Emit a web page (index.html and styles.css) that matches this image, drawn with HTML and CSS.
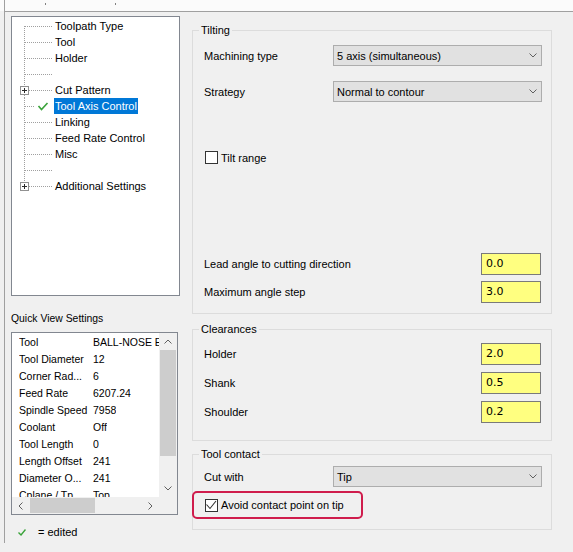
FILE: index.html
```html
<!DOCTYPE html>
<html>
<head>
<meta charset="utf-8">
<link rel="stylesheet" href="styles.css">
</head>
<body>
<div class="topstrip"><span class="vline"></span><span class="tick t1"></span><span class="tick t2"></span></div>
<div class="frame">
  <div class="left">
    <div class="tree">
      <div class="trow"><svg width="42" height="16"><path class="dot" d="M12.5 8V16M13 8.5H40"/></svg><span class="tlabel">Toolpath Type</span></div>
      <div class="trow"><svg width="42" height="16"><path class="dot" d="M12.5 0V16M13 8.5H40"/></svg><span class="tlabel">Tool</span></div>
      <div class="trow"><svg width="42" height="16"><path class="dot" d="M12.5 0V16M13 8.5H40"/></svg><span class="tlabel">Holder</span></div>
      <div class="trow"><svg width="42" height="16"><path class="dot" d="M12.5 0V16M13 8.5H40"/></svg><span class="tlabel"></span></div>
      <div class="trow"><svg width="42" height="16"><path class="dot" d="M12.5 0V4M12.5 13V16M17 8.5H40"/><rect class="pbox" x="8.5" y="4.5" width="8" height="8"/><path class="plus" d="M10 8.5H15M12.5 6V11"/></svg><span class="tlabel">Cut Pattern</span></div>
      <div class="trow"><svg width="42" height="16"><path class="dot" d="M12.5 0V16M13 8.5H22"/><path class="tcheck" d="M26.5 8L29.5 11.5L35.5 5"/></svg><span class="tlabel sel">Tool Axis Control</span></div>
      <div class="trow"><svg width="42" height="16"><path class="dot" d="M12.5 0V16M13 8.5H40"/></svg><span class="tlabel">Linking</span></div>
      <div class="trow"><svg width="42" height="16"><path class="dot" d="M12.5 0V16M13 8.5H40"/></svg><span class="tlabel">Feed Rate Control</span></div>
      <div class="trow"><svg width="42" height="16"><path class="dot" d="M12.5 0V16M13 8.5H40"/></svg><span class="tlabel">Misc</span></div>
      <div class="trow"><svg width="42" height="16"><path class="dot" d="M12.5 0V16M13 8.5H40"/></svg><span class="tlabel"></span></div>
      <div class="trow"><svg width="42" height="16"><path class="dot" d="M12.5 0V4M17 8.5H40"/><rect class="pbox" x="8.5" y="4.5" width="8" height="8"/><path class="plus" d="M10 8.5H15M12.5 6V11"/></svg><span class="tlabel">Additional Settings</span></div>
    </div>
    <div class="qv-label">Quick View Settings</div>
    <div class="listbox">
      <div class="lb-content">
        <div class="lb-row"><span class="c1">Tool</span><span class="c2">BALL-NOSE E...</span></div>
        <div class="lb-row"><span class="c1">Tool Diameter</span><span class="c2">12</span></div>
        <div class="lb-row"><span class="c1">Corner Rad...</span><span class="c2">6</span></div>
        <div class="lb-row"><span class="c1">Feed Rate</span><span class="c2">6207.24</span></div>
        <div class="lb-row"><span class="c1">Spindle Speed</span><span class="c2">7958</span></div>
        <div class="lb-row"><span class="c1">Coolant</span><span class="c2">Off</span></div>
        <div class="lb-row"><span class="c1">Tool Length</span><span class="c2">0</span></div>
        <div class="lb-row"><span class="c1">Length Offset</span><span class="c2">241</span></div>
        <div class="lb-row"><span class="c1">Diameter O...</span><span class="c2">241</span></div>
        <div class="lb-row"><span class="c1">Cplane / Tp...</span><span class="c2">Top</span></div>
      </div>
      <div class="vscroll">
        <div class="sb-btn"><svg width="8" height="5"><path class="arr" d="M0.5 4.5L4 1L7.5 4.5"/></svg></div>
        <div class="vthumb"></div>
        <div class="vtrack"></div>
        <div class="sb-btn"><svg width="8" height="5"><path class="arr" d="M0.5 0.5L4 4L7.5 0.5"/></svg></div>
      </div>
      <div class="hscroll">
        <div class="sb-btn h"><svg width="5" height="8"><path class="arr" d="M4.5 0.5L1 4L4.5 7.5"/></svg></div>
        <div class="hthumb"></div>
        <div class="htrack"></div>
        <div class="sb-btn h"><svg width="5" height="8"><path class="arr" d="M0.5 0.5L4 4L0.5 7.5"/></svg></div>
      </div>
      <div class="corner"></div>
    </div>
    <div class="legend"><svg width="8" height="7"><path class="lcheck" d="M0.5 3.5L3 6L7.5 0.5"/></svg><span class="ltext">= edited</span></div>
  </div>

  <div class="right">
    <div class="group g-tilt">
      <div class="gtitle">Tilting</div>
      <div class="gbody">
        <div class="row r-sel r1"><span>Machining type</span><div class="select"><span>5 axis (simultaneous)</span><svg width="8" height="5"><path class="chev" d="M0.5 0.5L4 4L7.5 0.5"/></svg></div></div>
        <div class="row r-sel r2"><span>Strategy</span><div class="select"><span>Normal to contour</span><svg width="8" height="5"><path class="chev" d="M0.5 0.5L4 4L7.5 0.5"/></svg></div></div>
        <div class="row r-cb"><span class="cb"></span><span class="cblabel">Tilt range</span></div>
        <div class="row r-num r-lead"><span>Lead angle to cutting direction</span><div class="num">0.0</div></div>
        <div class="row r-num r-gap6"><span>Maximum angle step</span><div class="num">3.0</div></div>
      </div>
    </div>

    <div class="group g-clear">
      <div class="gtitle">Clearances</div>
      <div class="gbody">
        <div class="row r-num r-first"><span>Holder</span><div class="num">2.0</div></div>
        <div class="row r-num r-gap7"><span>Shank</span><div class="num">0.5</div></div>
        <div class="row r-num r-gap7"><span>Shoulder</span><div class="num">0.2</div></div>
      </div>
    </div>

    <div class="group g-contact">
      <div class="gtitle">Tool contact</div>
      <div class="gbody">
        <div class="row r-sel r-cut"><span>Cut with</span><div class="select"><span>Tip</span><svg width="8" height="5"><path class="chev" d="M0.5 0.5L4 4L7.5 0.5"/></svg></div></div>
        <div class="hl"><span class="cb on"><svg width="11" height="11"><path d="M0.5 4.5L4 8.5L10 1"/></svg></span><span class="cblabel">Avoid contact point on tip</span></div>
      </div>
    </div>
  </div>
</div>
</body>
</html>
```

FILE: styles.css
```css
* { box-sizing: border-box; }
html, body { margin: 0; padding: 0; }
body {
  width: 573px;
  height: 552px;
  overflow: hidden;
  background: #f0f0f0;
  font-family: "Liberation Sans", Arial, sans-serif;
  font-size: 11px;
  color: #000;
}

.topstrip { height: 11px; background: #fbfbfb; display: flex; align-items: flex-start; }
.topstrip .vline { width: 1px; height: 11px; background: #a0a0a0; margin-left: 4px; }
.tick { width: 1px; height: 2px; background: #808080; margin-top: 3px; }
.tick.t1 { margin-left: 40px; }
.tick.t2 { margin-left: 69px; }

.frame {
  margin-left: 4px;
  border-left: 1px solid #a0a0a0;
  border-top: 1px solid #a0a0a0;
  height: 532px;
  padding: 4px 0 0 6px;
  display: flex;
  align-items: flex-start;
}

/* left column */
.left { width: 169px; flex: none; }
.tree { height: 280px; border: 1px solid #828790; background: #fff; padding-top: 1px; }
.trow { height: 16px; display: flex; align-items: center; }
.trow svg { flex: none; display: block; }
.tlabel { padding: 0 1px; height: 16px; line-height: 16px; white-space: nowrap; }
.tlabel.sel { background: #0078d7; color: #fff; }
.dot { stroke: #a0a0a0; stroke-dasharray: 1 1; fill: none; }
.pbox { fill: #fff; stroke: #919191; }
.plus { stroke: #2b2b2b; fill: none; }
.tcheck { stroke: #3aa33a; stroke-width: 1.6; fill: none; }

.qv-label { margin-top: 16px; height: 14px; line-height: 14px; font-size: 10.4px; }
.listbox {
  margin-top: 6px;
  width: 167px;
  height: 183px;
  border: 1px solid #828790;
  background: #fff;
  display: grid;
  grid-template-columns: 147px 18px;
  grid-template-rows: 164px 17px;
}
.lb-content { overflow: hidden; padding: 1px 0 0 7px; font-size: 10.5px; }
.lb-row { height: 17px; line-height: 17px; display: flex; white-space: nowrap; }
.c1 { width: 74px; flex: none; overflow: hidden; }
.c2 { overflow: hidden; }
.vscroll { background: #f0f0f0; display: flex; flex-direction: column; }
.sb-btn { height: 17px; flex: none; display: flex; align-items: center; justify-content: center; }
.sb-btn.h { width: 17px; height: 17px; }
.sb-btn svg { display: block; }
.arr { stroke: #606060; fill: none; }
.vthumb { height: 106px; margin: 0 1px 0 1px; background: #cdcdcd; flex: none; }
.vtrack { flex: 1; }
.hscroll { background: #f0f0f0; display: flex; align-items: center; }
.hthumb { width: 65px; height: 15px; margin-left: 1px; background: #cdcdcd; flex: none; }
.htrack { flex: 1; }
.corner { background: #f0f0f0; }

.legend { margin-top: 10px; height: 14px; display: flex; align-items: center; }
.legend svg { display: block; margin-left: 7px; flex: none; }
.lcheck { stroke: #3aa33a; stroke-width: 1.4; fill: none; }
.ltext { margin-left: 12px; }

/* right column */
.right { width: 360px; margin-left: 12px; flex: none; }
.group { border: 1px solid #dcdcdc; }
.gtitle {
  margin: -8px 0 0 6px;
  padding: 0 2px;
  background: #f0f0f0;
  height: 14px;
  line-height: 14px;
  width: max-content;
}
.gbody { padding: 0 9px 0 11px; }
.g-tilt { margin-top: 14px; }
.g-tilt .gbody { padding-bottom: 10px; }
.g-clear { margin-top: 15px; }
.g-clear .gbody { padding-bottom: 17px; }
.g-contact { margin-top: 13px; }
.g-contact .gbody { padding-bottom: 10px; }

.row { display: flex; align-items: center; justify-content: space-between; }
.r-sel { height: 21px; }
.r1 { margin-top: 8px; }
.r2 { margin-top: 15px; }
.r-cut { margin-top: 5px; }
.r-cb { height: 13px; margin-top: 49px; justify-content: flex-start; }
.r-num { height: 22px; }
.r-lead { margin-top: 89px; }
.r-gap6 { margin-top: 6px; }
.r-first { margin-top: 7px; }
.r-gap7 { margin-top: 7px; }

.select {
  width: 209px;
  height: 21px;
  border: 1px solid #adadad;
  background: #e1e1e1;
  display: flex;
  align-items: center;
  justify-content: space-between;
  padding: 0 4px 0 3px;
}
.select svg { display: block; flex: none; }
.chev { stroke: #606060; fill: none; }

.num {
  width: 60px;
  height: 22px;
  margin-right: 1px;
  border: 1px solid #7a7a7a;
  background: #ffff80;
  font-family: "DejaVu Sans", Verdana, sans-serif;
  font-size: 11px;
  line-height: 17px;
  padding: 1px 0 0 4px;
}

.cb {
  width: 13px;
  height: 13px;
  border: 1px solid #333;
  background: #fff;
  flex: none;
  margin-left: 1px;
  display: flex;
  align-items: center;
  justify-content: center;
}
.cb svg { display: block; }
.cb.on path { stroke: #333; stroke-width: 1.1; fill: none; }
.cblabel { margin-left: 3px; }

.hl {
  margin: 4px 0 0 -12px;
  width: 171px;
  height: 28px;
  border: 2px solid #cf1c4c;
  border-radius: 5px;
  display: flex;
  align-items: center;
  padding-left: 11px;
}
.hl .cb { margin-left: 0; }
```
